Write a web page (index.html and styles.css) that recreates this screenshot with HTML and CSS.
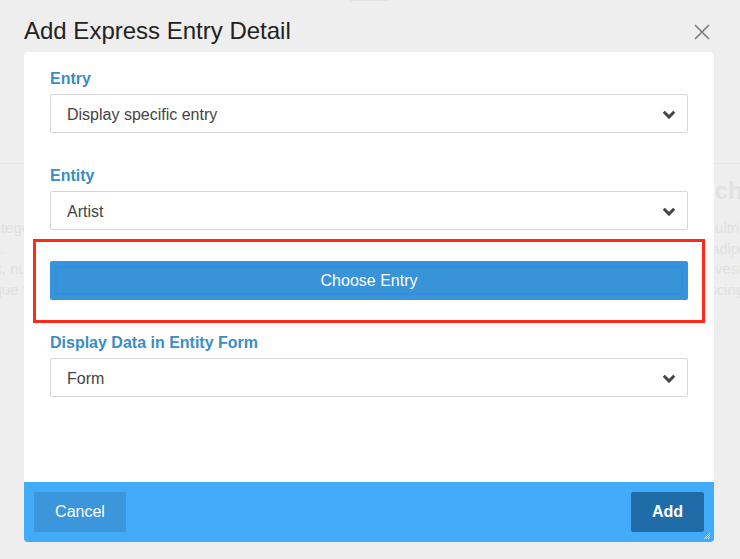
FILE: index.html
```html
<!DOCTYPE html>
<html lang="en">
<head>
  <meta charset="UTF-8">
  <meta name="viewport" content="width=device-width, initial-scale=1.0">
  <title>Add Express Entry Detail</title>
  <link rel="stylesheet" href="styles.css">
</head>
<body>
  <!-- Page behind the dialog -->
  <div class="backdrop">
    <div class="topbar"></div>
    <div class="section">
      <div class="col">
        <h3>Features</h3>
        <p>Lorem ipsum dolor sit amet, integer regula<br>pretium ac tincidunt adipiscing.<br>Aenean elementum vel aliquet, nunc vitae<br>Curabitur placerat tempus neque tellus</p>
      </div>
      <div class="col">
        <h3>Something Rich</h3>
        <p>Vestibulum ante ipsum ultrices<br>Curabitur auctor tortor adipiscing<br>Proin sit amet ornare investigat<br>Etiam amet dolor adipiscing</p>
      </div>
    </div>
  </div>

  <!-- Dialog -->
  <div class="dialog">
    <div class="dialog-header">
      <h1>Add Express Entry Detail</h1>
      <button class="close" aria-label="Close">
        <svg width="16" height="16" viewBox="0 0 16 16"><path d="M1 1L15 15M15 1L1 15" stroke="#7a7a7a" stroke-width="1.6" fill="none"/></svg>
      </button>
    </div>

    <div class="dialog-body">
      <div class="form-group">
        <label for="entry">Entry</label>
        <div class="select-wrap">
          <select id="entry"><option>Display specific entry</option></select>
          <svg class="chevron" width="14" height="9" viewBox="0 0 14 9"><path d="M1.8 1.8L7 7L12.2 1.8" stroke="#444" stroke-width="3" fill="none"/></svg>
        </div>
      </div>

      <div class="form-group">
        <label for="entity">Entity</label>
        <div class="select-wrap">
          <select id="entity"><option>Artist</option></select>
          <svg class="chevron" width="14" height="9" viewBox="0 0 14 9"><path d="M1.8 1.8L7 7L12.2 1.8" stroke="#444" stroke-width="3" fill="none"/></svg>
        </div>
      </div>

      <div class="highlight">
        <button class="btn-choose">Choose Entry</button>
      </div>

      <div class="form-group form-group-last">
        <label for="form">Display Data in Entity Form</label>
        <div class="select-wrap">
          <select id="form"><option>Form</option></select>
          <svg class="chevron" width="14" height="9" viewBox="0 0 14 9"><path d="M1.8 1.8L7 7L12.2 1.8" stroke="#444" stroke-width="3" fill="none"/></svg>
        </div>
      </div>
    </div>

    <div class="dialog-footer">
      <button class="btn-cancel">Cancel</button>
      <button class="btn-add">Add</button>
      <svg class="grip" width="8" height="8" viewBox="0 0 8 8"><path d="M7 1L1 7M7 3L3 7M7 5L5 7" stroke="#ffffff" stroke-width="0.8" opacity="0.8"/></svg>
    </div>
  </div>
</body>
</html>
```

FILE: styles.css
```css
/* Page */
body {
  margin: 0;
  padding: 0;
  background-color: #eeeeee;
  font-family: 'Liberation Sans', Arial, sans-serif;
  overflow: hidden;
  height: 559px;
}

.backdrop {
  color: #e1e1e1;
  overflow: hidden;
  height: 559px;
}

.topbar {
  width: 38px;
  height: 1px;
  margin-left: 350px;
  background-color: #e3e3e3;
}

.section {
  margin-top: 162px;
  border-top: 1px solid #e6e6e6;
  display: grid;
  grid-template-columns: 760px 400px;
  margin-left: -200px;
}

.col h3 {
  font-size: 24px;
  margin: 13px 0 0;
  line-height: 28px;
}

.col p {
  font-size: 15px;
  line-height: 20.7px;
  margin: 13px 0 0;
  white-space: nowrap;
}

/* Dialog */
.dialog {
  position: absolute;
  top: 0;
  left: 24px;
  width: 690px;
}

.dialog-header {
  height: 52px;
  display: flex;
  justify-content: space-between;
  align-items: center;
  padding-right: 4px;
}

.dialog-header h1 {
  margin: 0;
  font-size: 24px;
  font-weight: normal;
  color: #222;
  padding-top: 10px;
}

.close {
  background: none;
  border: none;
  padding: 0;
  margin-top: 12px;
  width: 16px;
  height: 16px;
  cursor: pointer;
}

.close svg {
  display: block;
}

.dialog-body {
  background-color: #fff;
  border-radius: 4px 4px 0 0;
  padding: 16px 26px 0;
  height: 414px;
}

.form-group {
  margin-bottom: 32px;
}

.form-group-last {
  margin-top: 9px;
}

.form-group label {
  display: block;
  font-size: 16px;
  font-weight: bold;
  line-height: 21px;
  color: #3a8dc6;
  margin-bottom: 5px;
}

.select-wrap {
  position: relative;
}

.select-wrap select {
  display: block;
  width: 100%;
  height: 39px;
  -webkit-appearance: none;
  appearance: none;
  border: 1px solid #d6d6d6;
  border-radius: 2px;
  background-color: #fff;
  padding: 2px 40px 0 16px;
  font-family: 'Liberation Sans', Arial, sans-serif;
  font-size: 16px;
  color: #444;
}

.chevron {
  position: absolute;
  right: 12px;
  top: 16px;
  pointer-events: none;
}

/* Red annotation box */
.highlight {
  margin: -23px -17px 0;
  padding: 19px 14px 20px;
  border: 3px solid #ff2a1a;
}

.btn-choose {
  display: block;
  width: 100%;
  height: 39px;
  background-color: #3893d8;
  color: #fff;
  border: none;
  border-radius: 2px;
  font-family: 'Liberation Sans', Arial, sans-serif;
  font-size: 16px;
  outline: 2px solid #3190e6;
  outline-offset: -7px;
  cursor: pointer;
}

/* Footer */
.dialog-footer {
  position: relative;
  background-color: #42abfa;
  border-radius: 0 0 4px 4px;
  height: 60px;
  padding: 10px;
  box-sizing: border-box;
  display: flex;
  justify-content: space-between;
}

.dialog-footer button {
  height: 40px;
  border: none;
  border-radius: 2px;
  color: #fff;
  font-family: 'Liberation Sans', Arial, sans-serif;
  font-size: 16px;
  cursor: pointer;
}

.btn-cancel {
  width: 92px;
  background-color: #3b96dc;
}

.btn-add {
  width: 73px;
  background-color: #1f6ca9;
  font-weight: bold;
}

.grip {
  position: absolute;
  right: 3px;
  bottom: 2px;
}
```
